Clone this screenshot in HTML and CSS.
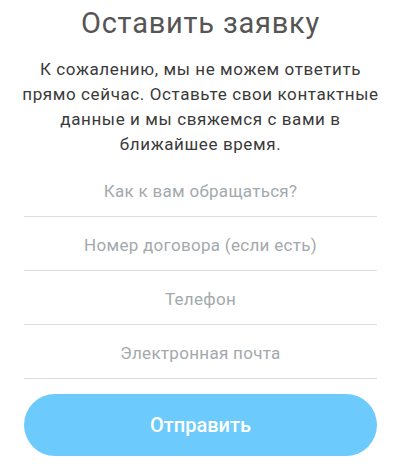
FILE: index.html
```html
<!DOCTYPE html>
<html lang="ru">
<head>
<meta charset="utf-8">
<title>Оставить заявку</title>
<link rel="stylesheet" href="styles.css">
</head>
<body>
<main class="form">
  <h1 class="title">Оставить заявку</h1>
  <p class="lead">К сожалению, мы не можем ответить<br>прямо сейчас. Оставьте свои контактные<br>данные и мы свяжемся с вами в<br>ближайшее время.</p>
  <div class="fields">
    <div class="field">Как к вам обращаться?</div>
    <div class="field">Номер договора (если есть)</div>
    <div class="field">Телефон</div>
    <div class="field">Электронная почта</div>
  </div>
  <button class="submit" type="button">Отправить</button>
</main>
</body>
</html>
```
FILE: styles.css
```css
html, body {
  margin: 0;
  padding: 0;
  background: #ffffff;
}
body {
  font-family: Roboto, "Noto Sans", sans-serif;
}
.form {
  display: flex;
  flex-direction: column;
  padding: 6px 23px 0 24px;
}
.title {
  margin: 0;
  font-size: 29px;
  line-height: 34px;
  font-weight: 400;
  letter-spacing: 0.8px;
  color: #555555;
  text-align: center;
}
.lead {
  margin: 17px -12px 0;
  font-size: 17px;
  line-height: 25px;
  letter-spacing: 0.6px;
  color: #3a3a3a;
  text-align: center;
}
.fields {
  margin-top: 6px;
  display: flex;
  flex-direction: column;
}
.field {
  height: 50px;
  padding-top: 3px;
  line-height: 50px;
  border-bottom: 1px solid #dcdfe1;
  font-size: 17px;
  letter-spacing: 0.3px;
  color: #a3a9ad;
  text-align: center;
}
.submit {
  margin-top: 15px;
  height: 62px;
  border: none;
  border-radius: 31px;
  background: #6ccbfc;
  color: #ffffff;
  font-family: Roboto, "Noto Sans", sans-serif;
  font-size: 20px;
  font-weight: 500;
  padding: 0;
}
```
